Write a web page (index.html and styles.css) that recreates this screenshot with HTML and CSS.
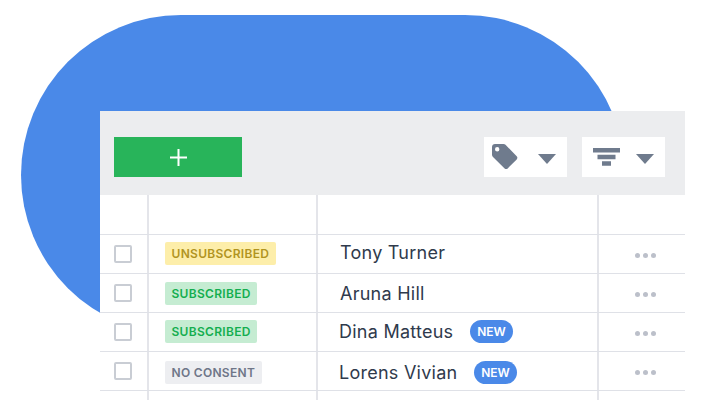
FILE: index.html
```html
<!DOCTYPE html>
<html lang="en">
<head>
    <meta charset="UTF-8">
    <title>Contacts</title>
    <link rel="stylesheet" href="styles.css">
</head>
<body>
    <div class="blob"></div>
    <div class="panel">
        <div class="toolbar">
            <div class="add">
                <svg width="17" height="17" viewBox="0 0 17 17"><path d="M8.500 0v17M0 8.500h17" stroke="#fff" stroke-width="2" fill="none"/></svg>
            </div>
            <div class="tool tool-tag">
                <svg width="26" height="26" viewBox="0 0 26 26"><path fill-rule="evenodd" fill="#6f7b8d" d="M3 0h8.500c.8 0 1.500.3 2 .8l11.200 11.500c.9.9.9 2.200 0 3.100l-9 9c-.9.9-2.200.9-3.100 0L1 12.900c-.6-.6-1-1.300-1-2.100V3c0-1.700 1.300-3 3-3zM5.200 3a2.200 2.200 0 1 0 0 4.400 2.200 2.200 0 0 0 0-4.400z"/></svg>
                <span class="arrow"></span>
            </div>
            <div class="tool tool-filter">
                <svg width="27" height="18" viewBox="0 0 27 18"><path fill="#6f7b8d" d="M0 0h27v4.500H0zM4.500 6.700h18v4.500h-18zM9 13.200h9v4.500H9z"/></svg>
                <span class="arrow"></span>
            </div>
        </div>
        <div class="row head">
            <div class="cell"></div>
            <div class="cell"></div>
            <div class="cell"></div>
            <div class="cell"></div>
        </div>
        <div class="row row-first">
            <div class="cell"><span class="check"></span></div>
            <div class="cell cell-status"><span class="status unsub">UNSUBSCRIBED</span></div>
            <div class="cell cell-name">Tony Turner</div>
            <div class="cell cell-more"><span class="dots"><i></i><i></i><i></i></span></div>
        </div>
        <div class="row">
            <div class="cell"><span class="check"></span></div>
            <div class="cell cell-status"><span class="status sub">SUBSCRIBED</span></div>
            <div class="cell cell-name">Aruna Hill</div>
            <div class="cell cell-more"><span class="dots"><i></i><i></i><i></i></span></div>
        </div>
        <div class="row row-third">
            <div class="cell"><span class="check"></span></div>
            <div class="cell cell-status"><span class="status sub">SUBSCRIBED</span></div>
            <div class="cell cell-name cell-new">Dina Matteus <span class="new">NEW</span></div>
            <div class="cell cell-more"><span class="dots"><i></i><i></i><i></i></span></div>
        </div>
        <div class="row row-fourth">
            <div class="cell"><span class="check"></span></div>
            <div class="cell cell-status"><span class="status none">NO CONSENT</span></div>
            <div class="cell cell-name cell-new">Lorens Vivian <span class="new">NEW</span></div>
            <div class="cell cell-more"><span class="dots"><i></i><i></i><i></i></span></div>
        </div>
        <div class="row row-end">
            <div class="cell"></div>
            <div class="cell"></div>
            <div class="cell"></div>
            <div class="cell"></div>
        </div>
    </div>
</body>
</html>
```

FILE: styles.css
```css
html, body {
    margin: 0;
    height: 400px;
    overflow: hidden;
    background: #fff;
    font-family: Inter, "Liberation Sans", sans-serif;
}
.blob {
    position: absolute;
    left: 21px;
    top: 15px;
    width: 604px;
    height: 320px;
    border-radius: 160px;
    background: #4a89e8;
}
.panel {
    position: relative;
    margin: 111px 35px 0 100px;
    background: #fff;
}
.toolbar {
    display: flex;
    align-items: flex-start;
    height: 58px;
    padding: 26px 20px 0 14px;
    background: #ecedef;
}
.add {
    display: flex;
    align-items: center;
    justify-content: center;
    width: 128px;
    height: 40px;
    margin-right: auto;
    background: #28b45a;
}
.tool {
    display: flex;
    align-items: center;
    height: 40px;
    background: #fff;
}
.tool-tag {
    padding-left: 8px;
    width: 75px;
    gap: 20px;
}
.tool-filter {
    margin-left: 15px;
    padding-left: 11px;
    width: 72px;
    gap: 16px;
}
.arrow {
    width: 0;
    height: 0;
    margin-top: 4px;
    border-style: solid;
    border-width: 10px 9.500px 0;
    border-color: #6f7b8d transparent transparent;
}
.row {
    display: grid;
    grid-template-columns: 49px 169px 281px 86px;
    height: 38px;
    border-bottom: 1px solid #dfe1e7;
}
.head {
    height: 39px;
}
.row-end {
    height: 9px;
    border-bottom: none;
}
.cell {
    display: flex;
    align-items: center;
    border-right: 2px solid #e4e5ea;
}
.cell:last-child {
    border-right: none;
}
.check {
    box-sizing: border-box;
    width: 18px;
    height: 18px;
    margin-left: 14px;
    border: 2px solid #c9cdd4;
    border-radius: 2px;
}
.cell-status {
    padding-left: 16px;
}
.status {
    padding: 0 6.500px;
    height: 23px;
    line-height: 23px;
    border-radius: 2px;
    font-size: 12px;
    font-weight: 600;
    letter-spacing: 0.3px;
}
.unsub {
    background: #fdeeaa;
    color: #b1941f;
}
.sub {
    background: #c5ecd2;
    color: #14ae4f;
}
.none {
    background: #edeef1;
    color: #6f7688;
}
.cell-name {
    padding-left: 22px;
    font-size: 18px;
    letter-spacing: 0.25px;
    color: #2f3a4c;
}
.cell-new {
    padding-left: 21px;
    white-space: pre;
}
.new {
    height: 23px;
    margin-left: 11px;
    padding: 0 7.500px;
    line-height: 23px;
    border-radius: 12px;
    background: #4a89e8;
    color: #fff;
    font-size: 12px;
    font-weight: 600;
    letter-spacing: 0;
}
.row-first .cell-status {
    padding-bottom: 2px;
}
.row-first .cell-name {
    padding-bottom: 4px;
}
.row-third .cell-status, .row-third .cell-name {
    padding-bottom: 1px;
}
.row-fourth .cell-status, .row-fourth .cell-name {
    padding-top: 2px;
}
.cell-more {
    justify-content: center;
    padding: 2px 0 0 6px;
}
.dots {
    display: flex;
    gap: 3px;
}
.dots i {
    width: 5px;
    height: 5px;
    border-radius: 50%;
    background: #bcc0ca;
}
```
